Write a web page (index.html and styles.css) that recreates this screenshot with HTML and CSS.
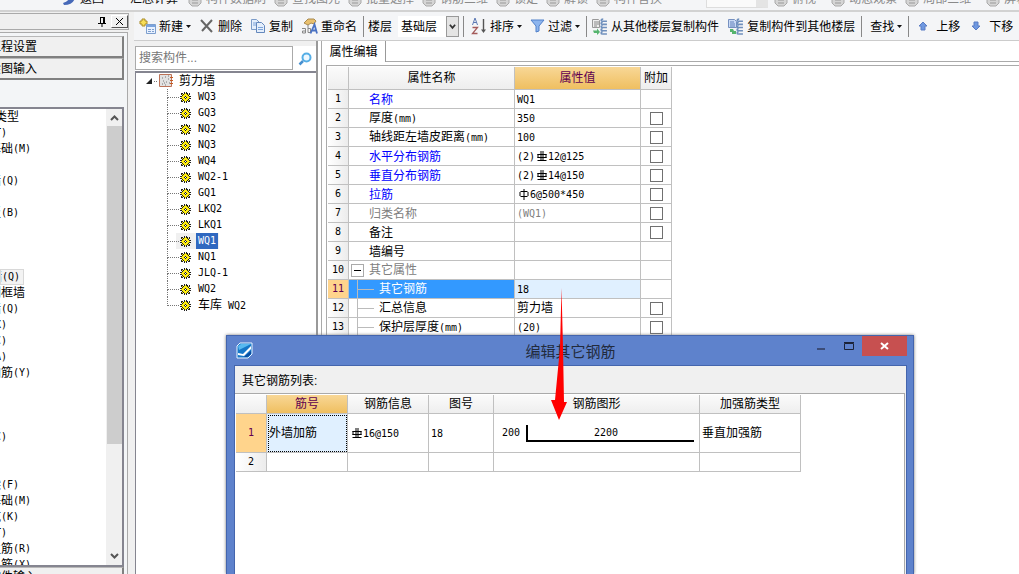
FILE: index.html
```html
<!DOCTYPE html>
<html lang="zh-CN">
<head>
<meta charset="utf-8">
<title>属性编辑</title>
<link rel="stylesheet" href="styles.css">
</head>
<body>
<svg class="defs" width="0" height="0" aria-hidden="true">
  <symbol id="gear" viewBox="0 0 11 11">
    <path d="M4 0h1v1h1V0h1v1h1v1h1V1h1v2h-1v1h2v1h-1v1h1v1H9v1h1v2H8V9H7v2H6v-1H5v1H4V9H3v1H1V8h1V7H0V6h1V5H0V4h2V3H1V1h2v1h1z" fill="#222"/>
    <path d="M5 1h1v2H5zM5 8h1v2H5zM1 5h2v1H1zM8 5h2v1H8zM2 2h1v1H2zM8 2h1v1H8zM2 8h1v1H2zM8 8h1v1H8zM3 3h1V2h1v1h1V2h1v1h1v1h1v1H8v1h1v1H8v1H7v1H6V8H5v1H4V8H3V7H2V6h1V5H2V4h1z" fill="#ffee10"/>
    <path d="M5 4h1v1h1v1H6v1H5V6H4V5h1z" fill="#222"/><path d="M5 5h1v1H5z" fill="#fff"/>
  </symbol>
  <symbol id="bar3" viewBox="0 0 12 12">
    <path d="M2.500 4V8M2 4.500H11M10.500 4V8M2 7.500H11M5.500 1V11M7.500 1V11M2 10.500H11" stroke="#000" fill="none"/>
  </symbol>
  <symbol id="bar1" viewBox="0 0 12 12">
    <path d="M3 3.500H10M3 8.500H10M2.500 4V8M10.500 4V8M6.500 1V12" stroke="#000" fill="none"/>
  </symbol>
  <symbol id="floors" viewBox="0 0 16 16">
    <path d="M11.500 1C9 1 9 3 11 3h4M11 4c-2 0-2 2 0 2h4M11 7c-2 0-2 2 0 2h4M11 10c-2 0-2 2 0 2h4M11 13c-2 0-2 2 0 2h4" fill="none" stroke="#6f90bd" stroke-width="1.500"/>
  </symbol>
  <symbol id="down" viewBox="0 0 5 3"><path d="M0 0h5L2.500 3z" fill="#111"/></symbol>
  <symbol id="blob" viewBox="0 0 14 12"><path d="M1 1h12v7l-3 3H4L1 8z" fill="#d5d5d5" stroke="#aaa"/><path d="M4 5h6M4 8h6" stroke="#999"/></symbol>
</svg>

<header class="strip">
  <svg class="ic first" viewBox="0 0 14 12"><path d="M2 10Q12 10 13 2L8 0Q8 6 1 8z" fill="#4669b8"/></svg>
  <span class="on w50">返回</span><span class="on w58">汇总计算</span>
  <svg class="ic"><use href="#blob"/></svg><span>构件数据刷</span>
  <svg class="ic"><use href="#blob"/></svg><span>查找图元</span>
  <svg class="ic"><use href="#blob"/></svg><span>批量选择</span>
  <svg class="ic"><use href="#blob"/></svg><span>钢筋三维</span>
  <svg class="ic"><use href="#blob"/></svg><span>锁定</span>
  <svg class="ic"><use href="#blob"/></svg><span>解锁</span>
  <svg class="ic"><use href="#blob"/></svg><span class="last">构件替换</span>
  <i class="combo"></i>
  <svg class="ic"><use href="#blob"/></svg><span class="wide">俯视</span>
  <svg class="ic"><use href="#blob"/></svg><span>动态观察</span>
  <svg class="ic"><use href="#blob"/></svg><span class="wide">局部三维</span>
  <svg class="ic"><use href="#blob"/></svg><span>屏幕</span>
</header>

<div class="work">
  <aside class="dock">
    <div class="caption">
      <svg width="10" height="12" viewBox="0 0 10 12"><path d="M3 1.500h5M3.500 1v6M6.500 1v6M7.500 1v6M1 7.500h8M5 8v3" stroke="#000" fill="none"/></svg>
      <button class="x" aria-label="关闭"><svg width="9" height="9" viewBox="0 0 9 9"><path d="M1 1l7 7M8 1L1 8" stroke="#000"/></svg></button>
    </div>
    <div class="pane">
      <button class="big"><span>工程设置</span></button>
      <button class="big"><span>绘图输入</span></button>
      <div class="listbox">
        <ul>
          <li class="e2">构件类型</li><li class="e1">柱<i>(T)</i></li><li class="e3">筏板基础<i>(M)</i></li><li></li>
          <li class="e2">剪力墙<i>(Q)</i></li><li></li><li class="e2">楼板<i>(B)</i></li><li></li><li></li><li></li>
          <li class="e2 cur">剪力墙<i>(Q)</i></li><li class="e25">人防门框墙</li><li class="e2">砌体墙<i>(Q)</i></li>
          <li class="e1">门<i>(X)</i></li><li class="e1">窗<i>(C)</i></li><li class="e1">洞<i>(A)</i></li><li class="e3">砌体加筋<i>(Y)</i></li>
          <li></li><li></li><li></li><li class="e1">梯<i>(C)</i></li><li></li><li></li>
          <li class="e2">基础梁<i>(F)</i></li><li class="e3">筏板基础<i>(M)</i></li><li class="e2">集水坑<i>(K)</i></li><li class="e1">墩<i>(T)</i></li>
          <li class="e3">筏板主筋<i>(R)</i></li><li class="e3">筏板负筋<i>(X)</i></li>
        </ul>
        <div class="sbar">
          <svg width="9" height="6" viewBox="0 0 9 6"><path d="M1 5l3.500-3.500L8 5" fill="none" stroke="#555" stroke-width="2"/></svg>
          <i></i>
          <svg class="dn" width="9" height="6" viewBox="0 0 9 6"><path d="M1 1l3.500 3.500L8 1" fill="none" stroke="#555" stroke-width="2"/></svg>
        </div>
      </div>
      <button class="big foot"><span>单构件输入</span></button>
    </div>
  </aside>

  <main>
    <nav class="tools">
      <button class="new"><svg width="17" height="17" viewBox="0 0 17 17"><path d="M3 1h3v2h2v3H6v2H3V6H1V3h2z" fill="#f7de58" stroke="#a98b28"/><path d="M7.500 6.500h9v9h-9z" fill="#e8f1ff" stroke="#7d9fce"/><path d="M8 7h8v2H8z" fill="#7ba4de"/><path d="M9 11.500h3M13 11.500h2M9 13.500h3M13 13.500h2" stroke="#7d9fce"/></svg>新建<svg class="dd"><use href="#down"/></svg></button>
      <button><svg width="16" height="16" viewBox="0 0 16 16"><path d="M2 2l11 12M13 2L3 13" stroke="#666" stroke-width="2"/></svg>删除</button>
      <button><svg width="16" height="16" viewBox="0 0 16 16"><path d="M1.500 1.500h5l3 3v7h-8z" fill="#e4eefb" stroke="#7c9cc9"/><path d="M6.500 4.500h5l3 3v7h-8z" fill="#e4eefb" stroke="#6488bd"/><path d="M3 5h3M3 7h3M8 9.500h5M8 11.500h5" stroke="#7ca4da"/></svg>复制</button>
      <button><svg width="17" height="17" viewBox="0 0 17 17"><path d="M3 5l4-4h6l2 2-2 3-3-1-3 2z" fill="#e9c06e" stroke="#a98a50"/><path d="M1 10.500h3.500v4.500H1.500v-2h3M7 7v7.500h2.500v-4H7" stroke="#888" fill="none"/><path d="M9.500 15.500l4-9 2.500 9M11 12.500h4" stroke="#4a72c4" stroke-width="1.800" fill="none"/></svg>重命名</button>
      <hr>
      <label for="floor">楼层</label>
      <span class="sel"><select id="floor"><option>基础层</option></select><svg width="8" height="6" viewBox="0 0 8 6"><path d="M1 1l3 3.500L7 1" fill="none" stroke="#333" stroke-width="2"/></svg></span>
      <hr>
      <button class="sort"><svg width="16" height="18" viewBox="0 0 16 18"><path d="M1.500 8l2.500-7 2.500 7M2.500 5.500h3" stroke="#5c79b4" fill="none"/><path d="M1.500 10.500h5l-5 6h5" stroke="#a45b5b" fill="none" stroke-width="1.300"/><path d="M12.500 2v12" stroke="#555" stroke-width="1.400"/><path d="M10 12.500h5L12.500 16z" fill="#555"/></svg>排序<svg class="dd"><use href="#down"/></svg></button>
      <button class="filt"><svg width="15" height="16" viewBox="0 0 15 16"><path d="M1 2h13L9 8v5l-3 1V8z" fill="#8db5ee" stroke="#5180c9"/></svg>过滤<svg class="dd"><use href="#down"/></svg></button>
      <hr>
      <button><svg width="17" height="17" viewBox="0 0 17 17"><path d="M1.500 1.500h6l1 1v7h-7z" fill="#eee" stroke="#999"/><path d="M3 4h5M3 6h5M3 8h3" stroke="#888"/><use href="#floors" width="17" height="17"/><path d="M2 12.500h4v-2l3 3.500-3 3v-2H3z" fill="#55b46e"/></svg>从其他楼层复制构件</button>
      <button><svg width="17" height="17" viewBox="0 0 17 17"><path d="M1.500 1.500h6l2 2v6h-8z" fill="#c9daf5" stroke="#7690c0"/><path d="M3 4h4M3 6h5M3 8h5" stroke="#6080bb"/><use href="#floors" width="17" height="17"/><path d="M3 11h3l1 2h2v3H5v-2H3z" fill="#55b46e"/></svg>复制构件到其他楼层</button>
      <hr>
      <button class="find">查找<svg class="dd"><use href="#down"/></svg></button>
      <hr>
      <button class="mv"><svg width="10" height="11" viewBox="0 0 10 11"><path d="M5 1l4 4H7v4H3V5H1z" fill="#6f98e0" stroke="#5a7cc4"/></svg>上移</button>
      <button class="mv"><svg width="10" height="11" viewBox="0 0 10 11"><path d="M5 9l4-4H7V1H3v4H1z" fill="#6f98e0" stroke="#5a7cc4"/></svg>下移</button>
    </nav>

    <div class="split">
      <section class="left">
        <div class="search">
          <input type="text" placeholder="搜索构件..." aria-label="搜索构件">
          <button aria-label="搜索"><svg width="14" height="14" viewBox="0 0 14 14"><circle cx="8.500" cy="5.500" r="4" fill="#eef8ff" stroke="#55aee6" stroke-width="2"/><path d="M5 9l-3.500 3.500" stroke="#4790d0" stroke-width="2.500"/></svg></button>
        </div>
        <div class="tree">
          <div class="root">
            <svg width="6" height="6" viewBox="0 0 6 6"><path d="M6 0v6H0z" fill="#222"/></svg><b></b>
            <svg width="15" height="14" viewBox="0 0 15 14"><path d="M.5.5h12v12H.5z" fill="#e2e2e2" stroke="#bd7358"/><path d="M3 4h1M6 3h1M9 5h1M4 7h1M7 8h1M10 9h1M3 10h1M6 11h1M9 2h1M5 9h1" stroke="#777"/><path d="M11 3.500h3M11 6.500h3M11 9.500h3" stroke="#c65a22"/></svg>
            <span>剪力墙</span>
          </div>
          <ul>
            <li><svg><use href="#gear"/></svg><span>WQ3</span></li>
            <li><svg><use href="#gear"/></svg><span>GQ3</span></li>
            <li><svg><use href="#gear"/></svg><span>NQ2</span></li>
            <li><svg><use href="#gear"/></svg><span>NQ3</span></li>
            <li><svg><use href="#gear"/></svg><span>WQ4</span></li>
            <li><svg><use href="#gear"/></svg><span>WQ2-1</span></li>
            <li><svg><use href="#gear"/></svg><span>GQ1</span></li>
            <li><svg><use href="#gear"/></svg><span>LKQ2</span></li>
            <li><svg><use href="#gear"/></svg><span>LKQ1</span></li>
            <li class="on"><svg><use href="#gear"/></svg><span>WQ1</span></li>
            <li><svg><use href="#gear"/></svg><span>NQ1</span></li>
            <li><svg><use href="#gear"/></svg><span>JLQ-1</span></li>
            <li><svg><use href="#gear"/></svg><span>WQ2</span></li>
            <li><svg><use href="#gear"/></svg><span><em>车库</em> WQ2</span></li>
          </ul>
        </div>
      </section>

      <section class="props">
        <div class="tabs"><button>属性编辑</button></div>
        <div class="sheet">
          <table class="grid">
            <colgroup><col class="c21"><col class="c166"><col class="c126"><col class="c31"></colgroup>
            <thead><tr><th></th><th>属性名称</th><th class="hot">属性值</th><th>附加</th></tr></thead>
            <tbody>
              <tr><th>1</th><td class="n b">名称</td><td><i>WQ1</i></td><td></td></tr>
              <tr><th>2</th><td class="n">厚度<i>(mm)</i></td><td><i>350</i></td><td class="k"><input type="checkbox" aria-label="厚度"></td></tr>
              <tr><th>3</th><td class="n">轴线距左墙皮距离<i>(mm)</i></td><td><i>100</i></td><td class="k"><input type="checkbox" aria-label="轴线距左墙皮距离"></td></tr>
              <tr><th>4</th><td class="n b">水平分布钢筋</td><td><i>(2)</i><svg class="rb"><use href="#bar3"/></svg><i>12@125</i></td><td class="k"><input type="checkbox" aria-label="水平分布钢筋"></td></tr>
              <tr><th>5</th><td class="n b">垂直分布钢筋</td><td><i>(2)</i><svg class="rb"><use href="#bar3"/></svg><i>14@150</i></td><td class="k"><input type="checkbox" aria-label="垂直分布钢筋"></td></tr>
              <tr><th>6</th><td class="n b">拉筋</td><td><svg class="rb"><use href="#bar1"/></svg><i>6@500*450</i></td><td class="k"><input type="checkbox" aria-label="拉筋"></td></tr>
              <tr><th>7</th><td class="n g">归类名称</td><td class="g"><i>(WQ1)</i></td><td class="k"><input type="checkbox" aria-label="归类名称"></td></tr>
              <tr><th>8</th><td class="n">备注</td><td></td><td class="k"><input type="checkbox" aria-label="备注"></td></tr>
              <tr><th>9</th><td class="n">墙编号</td><td></td><td></td></tr>
              <tr><th>10</th><td class="fold g"><button aria-label="折叠"></button>其它属性</td><td></td><td></td></tr>
              <tr class="act"><th>11</th><td class="sub"><span>其它钢筋</span></td><td><i>18</i></td><td></td></tr>
              <tr><th>12</th><td class="sub"><span>汇总信息</span></td><td>剪力墙</td><td class="k"><input type="checkbox" aria-label="汇总信息"></td></tr>
              <tr><th>13</th><td class="sub"><span>保护层厚度<i>(mm)</i></span></td><td><i>(20)</i></td><td class="k"><input type="checkbox" aria-label="保护层厚度"></td></tr>
            </tbody>
          </table>
        </div>
      </section>
    </div>
  </main>
</div>

<section class="dialog" role="dialog" aria-labelledby="dt">
  <div class="title">
    <svg width="17" height="17" viewBox="0 0 17 17"><path d="M4 1h12v11l-4 4H1V4z" fill="#1677c8" stroke="#e8f4ff"/><path d="M2 4l3-2h10L3 8z" fill="#58b9f0"/><path d="M2 11l5 1 8-8v3l-7 7-6-1z" fill="#fff"/><path d="M8 15l7-6v3l-4 3z" fill="#0b4ba0"/></svg>
    <h2 id="dt">编辑其它钢筋</h2>
    <div class="win">
      <button aria-label="最小化"><svg width="9" height="10" viewBox="0 0 9 10"><path d="M0 7h8v2H0z" fill="#3b4c78"/></svg></button>
      <button aria-label="最大化"><svg width="10" height="8" viewBox="0 0 10 8"><path d="M.5 1.500h9v6h-9zM0 .5h10" fill="none" stroke="#1b2338"/></svg></button>
      <button class="cl" aria-label="关闭"><svg width="9" height="8" viewBox="0 0 9 8"><path d="M1 1l7 6M8 1L1 7" stroke="#fff" stroke-width="2"/></svg></button>
    </div>
  </div>
  <div class="body">
    <p>其它钢筋列表:</p>
    <div class="area">
      <table class="grid rebar">
        <colgroup><col class="c31"><col class="c81"><col class="c81"><col class="c65"><col class="c206"><col class="c101"></colgroup>
        <thead><tr><th></th><th class="hot">筋号</th><th>钢筋信息</th><th>图号</th><th>钢筋图形</th><th>加强筋类型</th></tr></thead>
        <tbody>
          <tr class="tall"><th class="hotn">1</th><td class="foc">外墙加筋</td><td><svg class="rb"><use href="#bar3"/></svg><i>16@150</i></td><td><i>18</i></td>
            <td><div class="shape"><i>200</i><div><i>2200</i></div></div></td><td>垂直加强筋</td></tr>
          <tr><th>2</th><td></td><td></td><td></td><td></td><td></td></tr>
        </tbody>
      </table>
    </div>
  </div>
</section>

<svg class="arrow" width="18" height="132" viewBox="0 0 18 132"><path d="M10.500 0L12 60l1 54h3L8 132 0 112h4L9 60z" fill="#f00"/></svg>
</body>
</html>
```
FILE: styles.css
```css
* { box-sizing: border-box; }
html, body { height: 100%; }
body {
  margin: 0;
  display: flex;
  flex-direction: column;
  overflow: hidden;
  position: relative;
  background: #f0f0f0;
  color: #000;
  font: 12px/16px "Liberation Sans", "Noto Sans CJK SC", sans-serif;
}
button, input, select { font: inherit; color: inherit; margin: 0; padding: 0; border: 0; background: none; }
ul { list-style: none; margin: 0; padding: 0; }
i { font: 10px/16px "DejaVu Sans Mono", monospace; }
svg { flex: none; display: block; }
.defs { position: absolute; }

.strip {
  flex: none;
  display: flex;
  align-items: flex-end;
  height: 12px;
  padding: 0 0 3px 62px;
  overflow: hidden;
  white-space: nowrap;
  background: #f4f5f7;
  border-bottom: 2px solid #d2d2d2;
  color: #8a8a8a;
}
.strip span { flex: none; margin-right: 8px; }
.strip .on { color: #111; }
.strip .w50 { width: 42px; }
.strip .w58 { width: 50px; }
.strip .ic { width: 14px; height: 12px; margin-right: 4px; }
.strip .last { margin-right: 44px; }
.strip .wide { margin-right: 15px; }
.combo { flex: none; width: 62px; height: 20px; margin: 0 6px -1px 0; background: #fafafa; border: 1px solid #ddd; border-right: 12px solid #e4e4e4; }

.work { flex: 1; min-height: 0; display: flex; }

.dock { flex: none; width: 134px; display: flex; flex-direction: column; padding-right: 4px; }
.caption {
  flex: none;
  display: flex;
  align-items: center;
  justify-content: flex-end;
  gap: 4px;
  height: 17px;
  margin: 1px 1px 2px 0;
  border: 1px solid #aaa;
  border-left: 0;
}
.caption .x { width: 17px; height: 13px; display: grid; place-items: center; border: 1px solid #555; border-top-color: #fff; border-left-color: #fff; }
.pane { flex: 1; min-height: 0; display: flex; flex-direction: column; margin-right: 2px; padding: 3px 3px 0 0; border: 1px solid #aaa; border-left: 0; border-bottom: 0; background: #f3f5f7; }
.big { flex: none; height: 22px; border: 1px solid #808080; border-left: 0; border-width: 1px 2px 2px 0; border-top-color: #b8b8b8; background: #f0f0f0; width: 100%; display: flex; align-items: center; overflow: hidden; }
.big span { white-space: nowrap; width: 37px; display: flex; justify-content: flex-end; overflow: hidden; }
.listbox { flex: 1; min-height: 0; display: flex; margin-top: 27px; background: #fff; border: 2px solid #858590; border-left: 0; border-width: 2px 2px 2px 0; overflow: hidden; }
.listbox ul { flex: 1; }
.listbox li { height: 16px; display: flex; justify-content: flex-end; white-space: nowrap; overflow: hidden; }
.e1 { width: 7px; }
.e2 { width: 19px; }
.e25 { width: 25px; }
.e3 { width: 31px; }
.listbox li.cur { width: 24px; padding-right: 4px; background: #f3f3f3; outline: 1px solid #d8d8d8; outline-offset: -1px; }
.sbar { flex: none; width: 16px; display: flex; flex-direction: column; align-items: center; background: #f0f0f0; padding: 6px 0; }
.sbar i { width: 15px; height: 318px; margin-top: 5px; background: #cdcdcd; }
.sbar .dn { margin-top: auto; }
.big.foot { height: 7px; align-items: flex-start; border-bottom: 0; }
.big.foot span { flex: none; width: 37px; padding-top: 1px; }

main { flex: 1; min-width: 0; display: flex; flex-direction: column; background: #fff; }
.tools {
  flex: none;
  display: flex;
  align-items: center;
  height: 29px;
  padding-left: 5px;
  background: #f4f5f7;
  border-bottom: 1px solid #ccc;
  font-family: "Noto Sans CJK SC", sans-serif;
  white-space: nowrap;
  overflow: hidden;
}
.tools button { flex: none; display: flex; align-items: center; gap: 3px; margin-right: 8px; }
.tools .dd { width: 5px; height: 3px; }
.tools .find { margin-left: 4px; }
.tools .sort { margin-left: 3px; }
.tools .mv { gap: 8px; margin: 0 6px 0 5px; }
.tools hr { flex: none; width: 1px; height: 21px; margin: 0 4px 0 0; border: 0; background: #888; }
.tools button + hr { margin-left: -2px; }
.sel { flex: none; display: flex; align-items: center; position: relative; width: 61px; height: 21px; margin: 0 4px 0 6px; background: #fff; }
.sel select { appearance: none; width: 100%; height: 100%; padding-left: 3px; line-height: 20px; }
.sel svg { position: absolute; right: 0; width: 13px; height: 21px; padding: 6px 2px; background: #e4e4e4; border: 1px solid #999; pointer-events: none; }

.split { flex: 1; min-height: 0; display: flex; }
.left { flex: none; width: 184px; display: flex; flex-direction: column; padding: 4px 0 0 1px; background: #f0f0f0; border-right: 2px solid #999; }
.search { flex: none; display: flex; height: 25px; margin: 1px 0 0; background: #fff; }
.search input { width: 158px; height: 24px; padding: 0 3px; border: 1px solid #aaa; background: #fff; outline: 0; }
.search input::placeholder { color: #777; }
.search button { flex: 1; display: grid; place-items: center; }
.tree { flex: 1; background: #fff; border: 1px solid #858590; border-width: 2px 0 0 1px; padding: 0 0 0 10px; }
.root { display: flex; align-items: center; height: 16px; }
.root b { width: 3px; margin: 0 2px; border-top: 1px dotted #777; }
.root span { margin-left: 5px; }
.tree ul { margin-left: 20px; }
.tree li { position: relative; display: flex; align-items: center; height: 16px; width: fit-content; margin-left: 1px; padding-left: 13px; }
.tree li::before { content: ""; position: absolute; left: 0; top: 0; width: 11px; height: 8px; border: dotted #777; border-width: 0 0 1px 1px; }
.tree li:not(:last-child)::after { content: ""; position: absolute; left: 0; top: 8px; height: 8px; border-left: 1px dotted #777; }
.tree li svg { width: 11px; height: 11px; }
.tree li span { margin-left: 5px; padding: 0 2px; font: 10px/16px "DejaVu Sans Mono", monospace; }
.tree li em { font: 12px/16px "Noto Sans CJK SC", sans-serif; }
.tree li.on { background: linear-gradient(#f0f0f0, #f0f0f0) 9px 0 no-repeat; padding-right: 1px; }
.tree li.on span { background: #2f68c0; color: #fff; }

.props { flex: 1; min-width: 0; display: flex; flex-direction: column; margin-left: 3px; border-left: 1px solid #aaa; }
.tabs { flex: none; display: flex; height: 21px; border-bottom: 1px solid #aaa; }
.tabs button { width: 64px; height: 21px; border-right: 1px solid #999; background: #fff; }
.sheet { flex: 1; margin: 3px 0 0 4px; padding: 1px 0 0 1px; border: 1px solid #aaa; border-width: 1px 0 0 1px; }

.grid { width: 344px; table-layout: fixed; border-collapse: separate; border-spacing: 0; }
.c21 { width: 21px; } .c31 { width: 31px; } .c65 { width: 65px; } .c81 { width: 81px; }
.c101 { width: 101px; } .c126 { width: 126px; } .c166 { width: 166px; } .c206 { width: 206px; }
.grid th, .grid td { height: 19px; padding: 0 0 0 2px; border: 1px solid #c0c0c0; border-width: 0 1px 1px 0; text-align: left; vertical-align: middle; white-space: nowrap; overflow: hidden; }
.grid th { padding: 0; font-weight: normal; text-align: center; background: linear-gradient(#fbfbfb, #eee); }
.grid tbody th { font: 10px/16px "DejaVu Sans Mono", monospace; background: linear-gradient(90deg, #fff, #ececec); }
.grid thead th { height: 23px; }
.grid thead th.hot { background: linear-gradient(#f8d796, #efbf60); color: #600050; }
.grid .n { padding: 1px 0 0 20px; }
.grid .b { color: #00f; }
.grid .g { color: #808080; }
.grid .k { text-align: center; padding: 0; }
.grid input { appearance: none; display: inline-block; width: 13px; height: 13px; border: 1px solid #707070; background: #fff; vertical-align: middle; }
.rb { display: inline-block; width: 13px; height: 12px; vertical-align: -2px; }
.fold button { width: 13px; height: 13px; margin: 0 5px 0 0; vertical-align: -2px; border: 1px solid #aaa; background: linear-gradient(#000, #000) center / 7px 1px no-repeat; }
.grid .sub { padding-left: 8px; }
.sub span { position: relative; display: block; height: 18px; line-height: 19px; padding-left: 21px; border-left: 1px solid #bbb; }
.sub span::before { content: ""; position: absolute; left: 0; top: 9px; width: 16px; border-top: 1px solid #bbb; }
.grid .act th { background: #ffd48c; color: #600050; }
.act td:nth-child(2) { background: #3399ff; color: #fff; }
.act td:nth-child(3) { background: #e0f0ff; }

.dialog { position: absolute; left: 226px; top: 335px; bottom: 0; width: 688px; display: flex; flex-direction: column; padding: 0 6px 0 7px; background: #5e82cc; border: 1px solid #4465ad; border-bottom: 0; box-shadow: 0 0 3px #777; }
.title { flex: none; display: grid; grid-template-columns: 1fr auto 1fr; align-items: center; height: 29px; }
.title svg { margin-left: 2px; }
.title h2 { margin: 0; font: 15px/20px "Noto Sans CJK SC", sans-serif; color: #222b3c; }
.win { display: flex; align-self: start; justify-content: flex-end; }
.win button { width: 27px; height: 20px; display: grid; place-items: center; }
.win .cl { width: 45px; background: #c75050; }
.win svg { margin: 0; }
.body { flex: 1; display: flex; flex-direction: column; background: #f0f0f0; border: 1px solid #4465ad; border-bottom: 0; }
.body p { flex: none; margin: 0; height: 27px; padding: 7px 7px 0; }
.area { flex: 1; margin-right: 1px; padding: 1px 0 0 1px; background: #fff; border: 1px solid #aaa; border-width: 1px 1px 0 0; }
.rebar { width: 565px; }
.grid.rebar thead th { height: 19px; }
.grid .tall th, .grid .tall td { height: 39px; }
.grid .tall .hotn { background: #ffd48c; color: #600050; }
.grid .foc { background: #e0f0ff; outline: 1px dotted #000; outline-offset: -2px; }
.shape { display: flex; align-items: center; gap: 6px; padding: 0 5px 0 6px; }
.shape > div { flex: 1; height: 17px; padding-right: 10px; border: solid #000; border-width: 0 0 2px 2px; text-align: center; line-height: 15px; }
.arrow { position: absolute; left: 551px; top: 288px; }
```
